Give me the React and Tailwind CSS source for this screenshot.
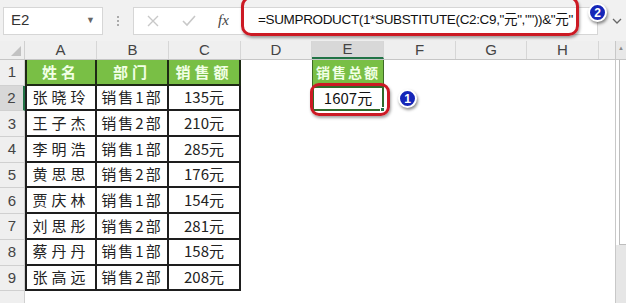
import { useState } from 'react'

const cols = [
    { k: 'A', w: 'w-[72px]' },
    { k: 'B', w: 'w-[72px]' },
    { k: 'C', w: 'w-[72px]' },
    { k: 'D', w: 'w-[71px]' },
    { k: 'E', w: 'w-[72px]' },
    { k: 'F', w: 'w-[72px]' },
    { k: 'G', w: 'w-[71px]' },
    { k: 'H', w: 'w-[72px]' },
]

const rows = [
    ['张晓玲', '销售1部', '135元'],
    ['王子杰', '销售2部', '210元'],
    ['李明浩', '销售1部', '285元'],
    ['黄思思', '销售2部', '176元'],
    ['贾庆林', '销售1部', '154元'],
    ['刘思彤', '销售2部', '281元'],
    ['蔡丹丹', '销售1部', '158元'],
    ['张高远', '销售2部', '208元'],
]

const cjk = "font-['SimSun','Noto_Sans_CJK_SC',sans-serif]"

function Badge({ n }) {
    return (
        <div className="w-[19px] h-[19px] rounded-full bg-[#1526b8] border-2 border-white shadow-[1px_2px_3px_rgba(0,0,0,0.45)] flex items-center justify-center text-white text-[12px] font-bold font-['Liberation_Sans',sans-serif] leading-none">
            {n}
        </div>
    )
}

export default function App() {
    const [sel] = useState('E2')

    return (
        <div className="relative w-[626px] h-[303px] overflow-hidden bg-white font-['Liberation_Sans',sans-serif]">
            {/* formula bar */}
            <div className="h-[41px] bg-[#f1f1f1] flex items-center pl-[3px] pr-[4px]">
                <div className="shrink-0 w-[100px] h-[28px] bg-white border border-[#d6d6d6] flex items-center justify-between px-[7px] text-[15px] text-[#333]">
                    <span>{sel}</span>
                    <span className="text-[9px] text-[#666]">▼</span>
                </div>
                <div className="shrink-0 w-[30px] flex flex-col items-center gap-[2px]">
                    <div className="w-[2px] h-[2px] bg-[#aaa]" />
                    <div className="w-[2px] h-[2px] bg-[#aaa]" />
                    <div className="w-[2px] h-[2px] bg-[#aaa]" />
                </div>
                <div className="flex-1 min-w-0 overflow-hidden h-[28px] bg-white border border-[#d6d6d6] flex items-center">
                    <div className="shrink-0 w-[124px] flex items-center pl-[12px] gap-[21px]">
                        <svg width="14" height="14" viewBox="0 0 14 14"><path d="M2 2 L12 12 M12 2 L2 12" stroke="#c8c8c8" strokeWidth="1.4" /></svg>
                        <svg width="16" height="14" viewBox="0 0 16 14"><path d="M2 7 L6 11 L14 2" stroke="#c8c8c8" strokeWidth="1.6" fill="none" /></svg>
                        <span className="font-['Liberation_Serif',serif] italic text-[15px] text-[#444]">fx</span>
                    </div>
                    <div className="text-[13.5px] tracking-[-0.35px] text-[#111] font-['Liberation_Sans','Noto_Sans_CJK_SC',sans-serif] whitespace-nowrap">
                        =SUMPRODUCT(1*SUBSTITUTE(C2:C9,"元",""))&"元"
                    </div>
                </div>
                <div className="shrink-0 w-[24px] flex justify-end text-[#666]">
                    <svg width="10" height="8" viewBox="0 0 10 8"><path d="M1 2 L5 6 L9 2" stroke="#666" strokeWidth="1.3" fill="none" /></svg>
                </div>
            </div>

            {/* column headers */}
            <div className="flex h-[19px] bg-[#efefef] border-b border-[#c6c6c6]">
                <div className="w-[25px] border-r border-[#d0d0d0] relative">
                    <div className="absolute right-[3px] bottom-[3px] w-0 h-0 border-l-[10px] border-l-transparent border-b-[10px] border-b-[#c2c2c2]" />
                </div>
                {cols.map(c => (
                    <div key={c.k} className={`${c.w} border-r border-[#d6d6d6] flex items-center justify-center text-[15px] text-[#444] ${c.k === 'E' ? 'bg-[#d8d8d8] border-b-2 border-b-[#217346]' : ''}`}>
                        {c.k}
                    </div>
                ))}
                <div className="w-[16px]" />
                <div className="w-[11px] bg-[#e8e8e8] border-l border-[#c8c8c8] flex justify-center pt-[3px]">
                    <span className="text-[6px] text-[#888]">▲</span>
                </div>
            </div>

            {/* rows */}
            <div className="flex">
                <div className="flex flex-col">
                    <div className="flex h-[25.7px]">
                        <div className="w-[25px] bg-[#efefef] border-r border-b border-[#d0d0d0] flex items-end justify-center pb-[1px] text-[15px] text-[#444]">1</div>
                        {['姓名', '部门', '销售额'].map((t, i) => (
                            <div key={t} className={`w-[72px] bg-[#79bf45] border-r-2 border-b-2 border-[#1e2a14] ${i === 0 ? 'border-l-2' : ''} flex items-center justify-center text-[15px] font-bold text-[#f2ffe6] tracking-[4px] ${cjk}`}>{t}</div>
                        ))}
                        <div className="w-[71px]" />
                        <div className="w-[72px] bg-[#79bf45] border-x border-[#3e6b27] flex items-center justify-center text-[14px] font-bold text-[#f2ffe6] tracking-[2px]">
                            <span className={cjk}>销售总额</span>
                        </div>
                    </div>
                    {rows.map((r, i) => (
                        <div key={i} className="flex h-[25.7px]">
                            <div className={`w-[25px] border-r border-b border-[#d0d0d0] flex items-end justify-center pb-[1px] text-[15px] text-[#444] ${i === 0 ? 'bg-[#d8d8d8] border-r-2 border-r-[#217346]' : 'bg-[#efefef]'}`}>{i + 2}</div>
                            <div className={`w-[72px] border-l-2 border-r-2 border-b-2 border-[#1e1e1e] flex items-center justify-center text-[15px] text-[#222] tracking-[4px] ${cjk}`}>{r[0]}</div>
                            <div className={`w-[72px] border-r-2 border-b-2 border-[#1e1e1e] flex items-center justify-center text-[15px] text-[#222] tracking-[2px] ${cjk}`}>{r[1]}</div>
                            <div className={`w-[72px] border-r-2 border-b-2 border-[#1e1e1e] flex items-center justify-center text-[15px] text-[#222] ${cjk}`}>{r[2]}</div>
                            <div className="w-[71px]" />
                            {i === 0 ? (
                                <div className={`relative w-[72px] border-2 border-[#2f6b2a] flex items-center justify-center text-[15px] text-[#111] ${cjk}`}>
                                    1607元
                                    <div className="absolute -right-[3px] -bottom-[3px] w-[5px] h-[5px] bg-[#217346] border border-white" />
                                </div>
                            ) : <div className="w-[72px]" />}
                        </div>
                    ))}
                    <div className="flex h-[20px]">
                        <div className="w-[25px] bg-[#efefef] border-r border-[#d0d0d0]" />
                    </div>
                </div>
                <div className="flex-1" />
                <div className="w-[11px] border-l border-[#c8c8c8] flex flex-col">
                    <div className="h-[185px] bg-white border-l border-b border-[#bdbdbd] ml-[3px]" />
                    <div className="flex-1 bg-[#e6e6e6]" />
                </div>
            </div>

            {/* callouts */}
            <div className="absolute left-[241px] top-[-4px] w-[338px] h-[40px] rounded-[10px] border-[3px] border-[#cc1a24] shadow-[1px_2px_3px_rgba(0,0,0,0.35)]" />
            <div className="absolute left-[588px] top-[3px]"><Badge n="2" /></div>
            <div className="absolute left-[310px] top-[83px] w-[80px] h-[33px] rounded-[9px] border-[3px] border-[#cc1a24] shadow-[1px_2px_3px_rgba(0,0,0,0.35)]" />
            <div className="absolute left-[398px] top-[89px]"><Badge n="1" /></div>
        </div>
    )
}
